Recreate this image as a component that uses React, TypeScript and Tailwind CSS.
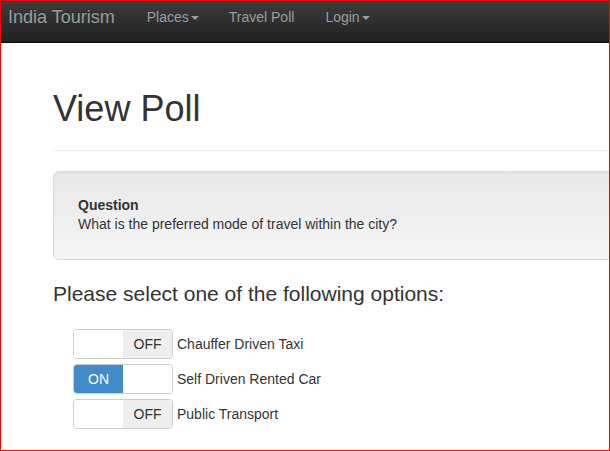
import React from "react";

const Caret = () => (
  <span className="ml-[2px] inline-block h-0 w-0 border-x-4 border-t-4 border-x-transparent border-t-[#9d9d9d] align-middle" />
);

const options = [
  { label: "Chauffer Driven Taxi", on: false },
  { label: "Self Driven Rented Car", on: true },
  { label: "Public Transport", on: false },
];

function Switch({ on }: { on: boolean }) {
  return (
    <div className="flex h-[30px] w-[100px] overflow-hidden rounded-[4px] border border-[#ccc] text-[14px] leading-[28px]">
      {on ? (
        <>
          <div className="w-1/2 bg-[#428bca] text-center text-white">ON</div>
          <div className="w-1/2 bg-white" />
        </>
      ) : (
        <>
          <div className="w-1/2 bg-white" />
          <div className="w-1/2 bg-[#eee] text-center text-[#333]">OFF</div>
        </>
      )}
    </div>
  );
}

export default function App() {
  return (
    <div className="box-border h-[451px] w-[610px] overflow-hidden border border-[#ff0000] bg-white font-['Liberation_Sans',Arial,sans-serif] text-[#333]">
      {/* Navbar */}
      <nav className="flex h-[42px] items-start border-b border-[#080808] bg-gradient-to-b from-[#3c3c3c] to-[#222] pl-[7px] pt-[6px] text-[#9d9d9d]">
        <span className="pr-[17px] text-[18px] leading-[20px] [text-shadow:0_-1px_0_rgba(0,0,0,0.25)]">
          India Tourism
        </span>
        <span className="px-[15px] text-[14px] leading-[20px]">
          Places
          <Caret />
        </span>
        <span className="px-[15px] text-[14px] leading-[20px]">Travel Poll</span>
        <span className="px-[16px] text-[14px] leading-[20px]">
          Login
          <Caret />
        </span>
      </nav>

      {/* Content */}
      <main className="ml-[52px] w-[600px]">
        <div className="border-b border-[#eee] pb-[21px] pt-[46px]">
          <h1 className="text-[36px] font-normal leading-[40px] text-[#333]">View Poll</h1>
        </div>

        <div className="mt-[20px] rounded-[6px] border border-[#dcdcdc] bg-gradient-to-b from-[#e8e8e8] to-[#f5f5f5] px-[24px] pb-[25px] pt-[24px] text-[14px] leading-[19px] shadow-[inset_0_1px_3px_rgba(0,0,0,0.05)]">
          <div className="font-bold">Question</div>
          <div>What is the preferred mode of travel within the city?</div>
        </div>

        <h4 className="mt-[22px] text-[21px] font-normal leading-[24px]">
          Please select one of the following options:
        </h4>

        <div className="ml-[20px] mt-[23px] flex flex-col gap-[5px]">
          {options.map((o) => (
            <div key={o.label} className="flex items-center">
              <Switch on={o.on} />
              <span className="ml-[4px] text-[14px] leading-[20px]">{o.label}</span>
            </div>
          ))}
        </div>
      </main>
    </div>
  );
}
